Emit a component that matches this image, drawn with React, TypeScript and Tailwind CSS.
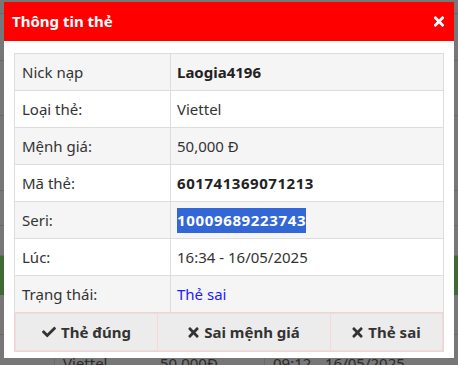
import { FaCheck, FaTimes } from "react-icons/fa";

const rows = [
  { label: "Nick nạp", value: "Laogia4196", kind: "bold" },
  { label: "Loại thẻ:", value: "Viettel", kind: "normal" },
  { label: "Mệnh giá:", value: "50,000 Đ", kind: "normal" },
  { label: "Mã thẻ:", value: "601741369071213", kind: "number" },
  { label: "Seri:", value: "10009689223743", kind: "selected" },
  { label: "Lúc:", value: "16:34 - 16/05/2025", kind: "normal" },
  { label: "Trạng thái:", value: "Thẻ sai", kind: "link" },
];

const font = { fontFamily: '"Segoe UI", "Noto Sans", sans-serif' };

const App: React.FC = () => {
  return (
    <div className="relative w-[458px] h-[365px] overflow-hidden bg-[#777777]" style={font}>
      {/* page behind the dialog */}
      <div className="flex flex-col">
        <div className="h-[14px] border-b border-[#6a6a6a]" />
        <div className="h-[47px] border-b border-[#6a6a6a]" />
        <div className="h-[55px] border-b border-[#6a6a6a]" />
        <div className="h-[75px] border-b border-[#6a6a6a]" />
        <div className="h-[35px] border-b border-[#6a6a6a]" />
        <div className="h-[30px] border-b border-[#6a6a6a]" />
        <div className="h-[39px] bg-[#3f6a34]" />
        <div className="h-[40px] border-b border-[#6a6a6a]" />
        <div className="flex h-[30px] text-[15px] text-[#2a2a2a] pt-[17px]">
          <div className="w-[55px] border-r border-[#6a6a6a]" />
          <div className="w-[105px] pl-[8px]">Viettel</div>
          <div className="w-[105px] border-r border-[#6a6a6a]">50,000Đ</div>
          <div className="pl-[8px] w-[60px]">09:12</div>
          <div>16/05/2025</div>
        </div>
      </div>

      {/* dialog */}
      <div className="absolute left-[4px] top-[2px] w-[450px] h-[356px] bg-white">
        <div className="flex items-center justify-between h-[39px] bg-[#ff0000] pl-[8px] pr-[9px] text-white">
          <span className="text-[15px] font-bold">Thông tin thẻ</span>
          <FaTimes className="w-[12px] h-[15px]" />
        </div>
        <div className="px-[10px] pt-[12px]">
          <div className="border border-[#dddddd] text-[15px] text-[#333333]">
            {rows.map((r, i) => (
              <div
                key={r.label}
                className={`flex h-[37px] border-b border-[#dddddd] ${i % 2 === 0 ? "bg-[#f5f5f5]" : "bg-white"}`}
              >
                <div className="w-[156px] flex items-center pl-[7px] border-r border-[#dddddd]">{r.label}</div>
                <div className="flex-1 flex items-center pl-[6px]">
                  {r.kind === "bold" && <span className="font-bold text-[#222]">{r.value}</span>}
                  {r.kind === "number" && <span className="font-bold text-[#222] tracking-[0.55px]">{r.value}</span>}
                  {r.kind === "normal" && <span>{r.value}</span>}
                  {r.kind === "link" && <span className="text-[#2020ff]">{r.value}</span>}
                  {r.kind === "selected" && (
                    <span className="font-bold text-white bg-[#3367d6] leading-[25px] tracking-[0.65px]">{r.value}</span>
                  )}
                </div>
              </div>
            ))}
            <div className="flex h-[38px] text-[15px] font-bold text-[#333333]">
              <button className="w-[143px] flex items-center justify-center gap-[5px] bg-[#ececec] border border-[#fcd5d5]">
                <FaCheck className="w-[14px] h-[14px]" /> Thẻ đúng
              </button>
              <button className="w-[173px] flex items-center justify-center gap-[5px] bg-[#ececec] border-y border-r border-[#fcd5d5]">
                <FaTimes className="w-[11px] h-[15px]" /> Sai mệnh giá
              </button>
              <button className="flex-1 flex items-center justify-center gap-[5px] bg-[#ececec] border-y border-r border-[#fcd5d5]">
                <FaTimes className="w-[11px] h-[15px]" /> Thẻ sai
              </button>
            </div>
          </div>
        </div>
      </div>
    </div>
  );
};

export default App;
